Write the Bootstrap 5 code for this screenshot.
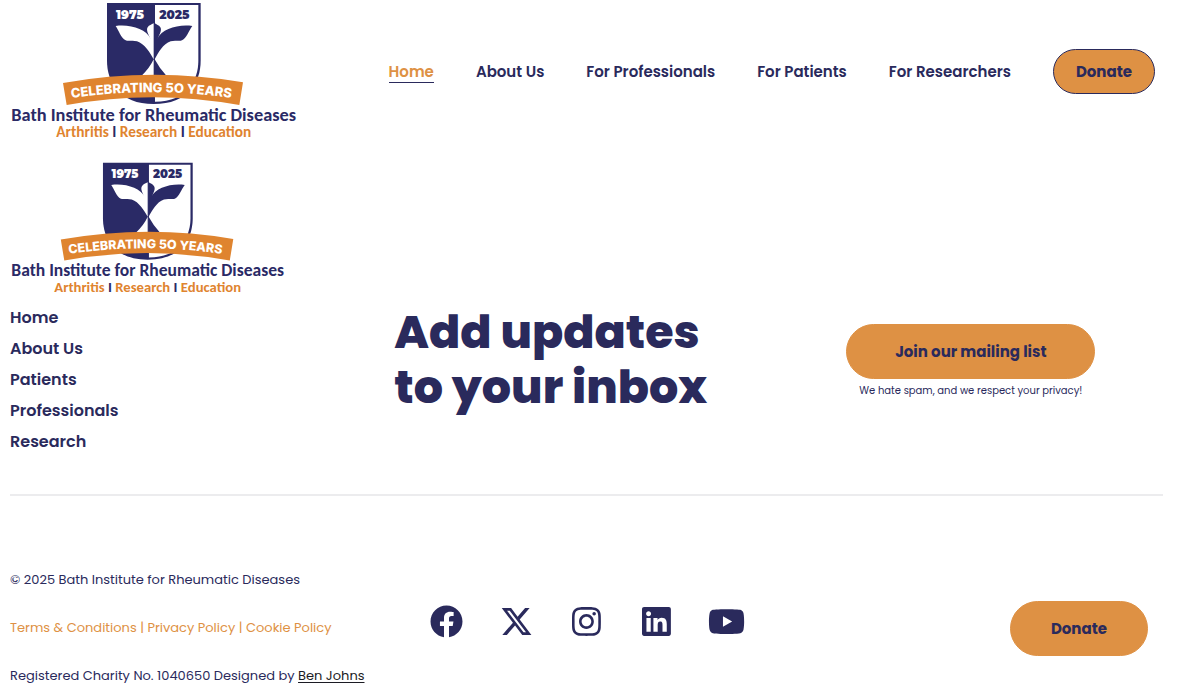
<!DOCTYPE html>
<html lang="en">
<head>
<meta charset="utf-8">
<meta name="viewport" content="width=device-width, initial-scale=1">
<title>Bath Institute for Rheumatic Diseases</title>
<link href="https://cdn.jsdelivr.net/npm/bootstrap@5.3.0/dist/css/bootstrap.min.css" rel="stylesheet">
<style>
:root { --navy: #2a2a5c; --amber: #de9144; }
body { font-family: Poppins, Inter, sans-serif; color: var(--navy); background: #fff; }
a { color: inherit; text-decoration: none; }
.logo-link svg { display: block; height: auto; }
.logo-lg { width: 288px; }
.logo-sm { width: 276px; }
.site-head { padding: 0 45px 20px 10px; }
.main-menu { gap: 20px 42px; padding-top: 49px; font-size: 15px; font-weight: 600; line-height: 20px; }
.main-menu .nav-link { padding: 0; color: var(--navy); border: solid transparent; border-width: 1px 0; }
.main-menu .nav-link.active { color: var(--amber); border-bottom-color: var(--navy); }
.pill { --bs-btn-bg: var(--amber); --bs-btn-color: var(--navy); --bs-btn-hover-bg: #cf8236; --bs-btn-hover-color: var(--navy);
  --bs-btn-border-color: var(--amber); --bs-btn-font-weight: 700; --bs-btn-font-size: 15px; --bs-btn-line-height: 21px; --bs-btn-border-radius: 28px; }
.pill-sm { --bs-btn-border-color: var(--navy); --bs-btn-padding-x: 22px; --bs-btn-padding-y: 11px; }
.pill-lg { --bs-btn-padding-x: 40px; --bs-btn-padding-y: 16px; }
.pill-wide { --bs-btn-padding-x: 48px; }
.site-foot { padding: 0 37px 0 10px; }
.side-menu { font-size: 16px; font-weight: 600; line-height: 31px; margin-top: 8px; }
.foot-top { padding-bottom: 37px; border-bottom: 2px solid #ececee; }
.cta-title { font-size: 46px; font-weight: 800; line-height: 55px; margin: 11px 0 0; }
.signup { margin-top: 30px; }
.fine { font-size: 10px; line-height: 24px; }
.foot-base { padding-top: 75px; }
.legal { gap: 30px; font-size: 13px; line-height: 18px; }
.legal .terms { color: var(--amber); }
.legal .credit { color: #1c1c24; text-decoration: underline; text-underline-offset: 2px; }
.social { gap: 32px; padding-top: 34px; }
.social a { width: 38px; }
.social svg { display: block; height: 33px; margin: 0 auto; fill: var(--navy); }
.foot-cta { padding: 30px 15px 0 0; }
</style>
</head>
<body>

<header class="site-head d-flex flex-wrap align-items-start justify-content-between">
  <a href="#" class="logo-link" aria-label="Bath Institute for Rheumatic Diseases home">
    <svg class="logo-lg" viewBox="30 0 864 420">
      <g id="logo">
        <path d="M321 9H602V182C602 246 565 312 461 312C358 312 321 246 321 182Z" fill="#2a2a66"/>
        <path d="M465 15H595V182C595 240 562 304 465 305Z" fill="#fff"/>
        <path d="M461 178Q450 203 424 228H461Z" fill="#fff"/>
        <path d="M464 178Q478 205 503 232H464Z" fill="#2a2a66"/>
        <path d="M347 78C390 72 438 87 452 116C444 103 438 90 443 82C447 75 455 74 461 70V178C450 158 434 132 411 124C397 119 386 125 377 121C363 114 356 91 347 78Z" fill="#fff"/>
        <path d="M577 78C534 72 486 87 472 116C480 103 486 90 481 82C477 75 469 74 464 70V178C475 158 489 132 512 124C526 119 537 125 546 121C560 114 567 91 577 78Z" fill="#2a2a66"/>
        <path d="M189 249Q459 201 729 247L718 315Q459 268 200 315Z" fill="#df842f"/>
        <path id="ribbon" d="M188 298Q454 255 720 298" fill="none"/>
        <g font-family="Montserrat, Inter, sans-serif" font-weight="900">
          <text x="348" y="56" font-size="36" fill="#fff">1975</text>
          <text x="478" y="56" font-size="36" fill="#2a2a66">2025</text>
        </g>
        <text font-family="Inter, sans-serif" font-size="39" font-weight="800" fill="#fff" text-anchor="middle"><textPath href="#ribbon" startOffset="50%">CELEBRATING 5O YEARS</textPath></text>
        <g font-family="Carlito, Lato, sans-serif" font-weight="700" text-anchor="middle">
          <text x="461" y="364" font-size="55" fill="#2a2a66">Bath Institute for Rheumatic Diseases</text>
          <text x="461" y="412" font-size="46" fill="#df842f">Arthritis <tspan fill="#2a2a66">I</tspan> Research <tspan fill="#2a2a66">I</tspan> Education</text>
        </g>
      </g>
    </svg>
  </a>
  <nav class="main-menu nav align-items-center" aria-label="Main">
    <a class="nav-link active" aria-current="page" href="#">Home</a>
    <a class="nav-link" href="#">About Us</a>
    <a class="nav-link" href="#">For Professionals</a>
    <a class="nav-link" href="#">For Patients</a>
    <a class="nav-link" href="#">For Researchers</a>
    <button type="button" class="btn pill pill-sm">Donate</button>
  </nav>
</header>

<footer class="site-foot">
  <a href="#" class="logo-link d-inline-block align-top" aria-label="Bath Institute for Rheumatic Diseases">
    <svg class="logo-sm" viewBox="30 0 864 420"><use href="#logo"/></svg>
  </a>
  <div class="foot-top row g-0">
    <ul class="side-menu list-unstyled mb-0 col-md-4">
      <li><a href="#">Home</a></li>
      <li><a href="#">About Us</a></li>
      <li><a href="#">Patients</a></li>
      <li><a href="#">Professionals</a></li>
      <li><a href="#">Research</a></li>
    </ul>
    <div class="col-md-4">
      <h2 class="cta-title">Add updates<br>to your inbox</h2>
    </div>
    <div class="col-md-4 text-center">
      <div class="signup">
        <button type="button" class="btn pill pill-lg pill-wide">Join our mailing list</button>
        <div class="fine">We hate spam, and we respect your privacy!</div>
      </div>
    </div>
  </div>

  <div class="foot-base row g-0">
    <div class="legal col-md-4 d-flex flex-column">
      <div>© 2025 Bath Institute for Rheumatic Diseases</div>
      <div class="terms"><a href="#">Terms &amp; Conditions</a> | <a href="#">Privacy Policy</a> | <a href="#">Cookie Policy</a></div>
      <div>Registered Charity No. 1040650 Designed by <a class="credit" href="#">Ben Johns</a></div>
    </div>
    <div class="social col-md-4 d-flex justify-content-center align-items-start">
      <a href="#" aria-label="Facebook"><svg viewBox="0 0 512 512"><path d="M504 256C504 119 393 8 256 8S8 119 8 256c0 123.78 90.69 226.38 209.25 245V327.69h-63V256h63v-54.64c0-62.15 37-96.48 93.67-96.48 27.14 0 55.52 4.84 55.52 4.84v61h-31.28c-30.8 0-40.41 19.12-40.41 38.73V256h68.78l-11 71.69h-57.78V501C413.31 482.38 504 379.78 504 256z"/></svg></a>
      <a href="#" aria-label="X"><svg viewBox="0 0 512 512"><path d="M389.2 48h70.6L305.6 224.2 487 464H345L233.7 318.6 106.5 464H35.8L200.7 275.5 26.8 48H172.4L272.9 180.9 389.2 48zM364.4 421.8h39.1L151.1 88h-42L364.4 421.8z"/></svg></a>
      <a href="#" aria-label="Instagram"><svg viewBox="0 0 448 512"><path d="M224.1 141c-63.6 0-114.9 51.3-114.9 114.9s51.3 114.9 114.9 114.9S339 319.5 339 255.9 287.7 141 224.1 141zm0 189.6c-41.1 0-74.7-33.5-74.7-74.7s33.5-74.7 74.7-74.7 74.7 33.5 74.7 74.7-33.6 74.7-74.7 74.7zm146.4-194.3c0 14.9-12 26.8-26.8 26.8-14.9 0-26.8-12-26.8-26.8s12-26.8 26.8-26.8 26.8 12 26.8 26.8zm76.1 27.2c-1.7-35.9-9.9-67.7-36.2-93.9-26.2-26.2-58-34.4-93.9-36.2-37-2.1-147.9-2.1-184.9 0-35.8 1.7-67.6 9.9-93.9 36.1s-34.4 58-36.2 93.9c-2.1 37-2.1 147.9 0 184.9 1.7 35.9 9.9 67.7 36.2 93.9s58 34.4 93.9 36.2c37 2.1 147.9 2.1 184.9 0 35.9-1.7 67.7-9.9 93.9-36.2 26.2-26.2 34.4-58 36.2-93.9 2.1-37 2.1-147.8 0-184.8zM398.8 388c-7.8 19.6-22.9 34.7-42.6 42.6-29.5 11.7-99.5 9-132.1 9s-102.7 2.6-132.1-9c-19.6-7.8-34.7-22.9-42.6-42.6-11.7-29.5-9-99.5-9-132.1s-2.6-102.7 9-132.1c7.8-19.6 22.9-34.7 42.6-42.6 29.5-11.7 99.5-9 132.1-9s102.7-2.6 132.1 9c19.6 7.8 34.7 22.9 42.6 42.6 11.7 29.5 9 99.5 9 132.1s2.7 102.7-9 132.1z"/></svg></a>
      <a href="#" aria-label="LinkedIn"><svg viewBox="0 0 448 512"><path d="M416 32H31.9C14.3 32 0 46.5 0 64.3v383.4C0 465.5 14.3 480 31.9 480H416c17.6 0 32-14.5 32-32.3V64.3c0-17.8-14.4-32.3-32-32.3zM135.4 416H69V202.2h66.5V416zm-33.2-243c-21.3 0-38.5-17.3-38.5-38.5S80.9 96 102.2 96c21.2 0 38.5 17.3 38.5 38.5 0 21.3-17.2 38.5-38.5 38.5zm282.1 243h-66.4V312c0-24.8-.5-56.7-34.5-56.7-34.6 0-39.9 27-39.9 54.9V416h-66.4V202.2h63.7v29.2h.9c8.9-16.8 30.6-34.5 62.9-34.5 67.2 0 79.7 44.3 79.7 101.9V416z"/></svg></a>
      <a href="#" aria-label="YouTube"><svg viewBox="0 0 576 512"><path d="M549.655 124.083c-6.281-23.65-24.787-42.276-48.284-48.597C458.781 64 288 64 288 64S117.22 64 74.629 75.486c-23.497 6.322-42.003 24.947-48.284 48.597-11.412 42.867-11.412 132.305-11.412 132.305s0 89.438 11.412 132.305c6.281 23.65 24.787 41.5 48.284 47.821C117.22 448 288 448 288 448s170.78 0 213.371-11.486c23.497-6.321 42.003-24.171 48.284-47.821 11.412-42.867 11.412-132.305 11.412-132.305s0-89.438-11.412-132.305zm-317.51 213.508V175.185l142.739 81.205-142.739 81.201z"/></svg></a>
    </div>
    <div class="foot-cta col-md-4 text-end">
      <button type="button" class="btn pill pill-lg">Donate</button>
    </div>
  </div>
</footer>

<script src="https://cdn.jsdelivr.net/npm/bootstrap@5.3.0/dist/js/bootstrap.bundle.min.js"></script>
</body>
</html>
